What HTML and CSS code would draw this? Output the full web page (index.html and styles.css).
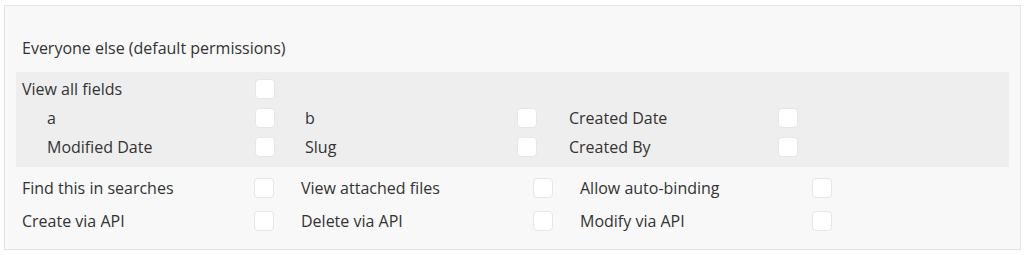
FILE: index.html
```html
<!DOCTYPE html>
<html lang="en">

<head>
    <meta charset="UTF-8">
    <title>Privacy rules</title>
    <link rel="stylesheet" href="styles.css">
</head>

<body>

    <div class="rule-box">
        <div class="rule-title">Everyone else (default permissions)</div>

        <div class="fields-section">
            <div class="all-row">
                <span class="label">View all fields</span>
                <span class="check"></span>
            </div>
            <div class="field-grid">
                <span class="label">a</span>
                <span class="check"></span>
                <span class="label">b</span>
                <span class="check"></span>
                <span class="label">Created Date</span>
                <span class="check"></span>

                <span class="label">Modified Date</span>
                <span class="check"></span>
                <span class="label">Slug</span>
                <span class="check"></span>
                <span class="label">Created By</span>
                <span class="check"></span>
            </div>
        </div>

        <div class="perm-grid">
            <div class="perm"><span class="label">Find this in searches</span><span class="check"></span></div>
            <div class="perm"><span class="label">View attached files</span><span class="check"></span></div>
            <div class="perm"><span class="label">Allow auto-binding</span><span class="check"></span></div>
            <div class="perm"><span class="label">Create via API</span><span class="check"></span></div>
            <div class="perm"><span class="label">Delete via API</span><span class="check"></span></div>
            <div class="perm"><span class="label">Modify via API</span><span class="check"></span></div>
        </div>
    </div>

</body>

</html>
```

FILE: styles.css
```css
body {
    font-family: "Open Sans", sans-serif;
    font-size: 16px;
    color: #333;
    margin: 0;
    padding: 0;
    background-color: #fff;
}

.rule-box {
    margin: 5px 3px 0 4px;
    padding: 32px 11px 9px 11px;
    background-color: #f8f8f8;
    border: 1px solid #e2e2e2;
    height: 202px;
}

.rule-title {
    padding-left: 6px;
    line-height: 20px;
    margin-bottom: 14px;
}

.fields-section {
    background-color: #eeeeee;
    padding: 2px 6px 6px 6px;
}

.all-row {
    display: flex;
    align-items: center;
    height: 29px;
}

.all-row .label {
    width: 233px;
}

.field-grid {
    display: grid;
    grid-template-columns: 208px 50px 212px 52px 209px 20px;
    grid-auto-rows: 29px;
    align-items: center;
    padding-left: 25px;
}

.label {
    line-height: 20px;
    white-space: nowrap;
}

.check {
    display: block;
    width: 20px;
    height: 20px;
    box-sizing: border-box;
    background-color: #fff;
    border: 1px solid #e6e6e6;
    border-radius: 4px;
}

.perm-grid {
    display: grid;
    grid-template-columns: repeat(3, 279px);
    grid-auto-rows: 33px;
    padding: 4px 6px 0 6px;
}

.perm {
    display: flex;
    align-items: center;
}

.perm .label {
    width: 232px;
}
```
